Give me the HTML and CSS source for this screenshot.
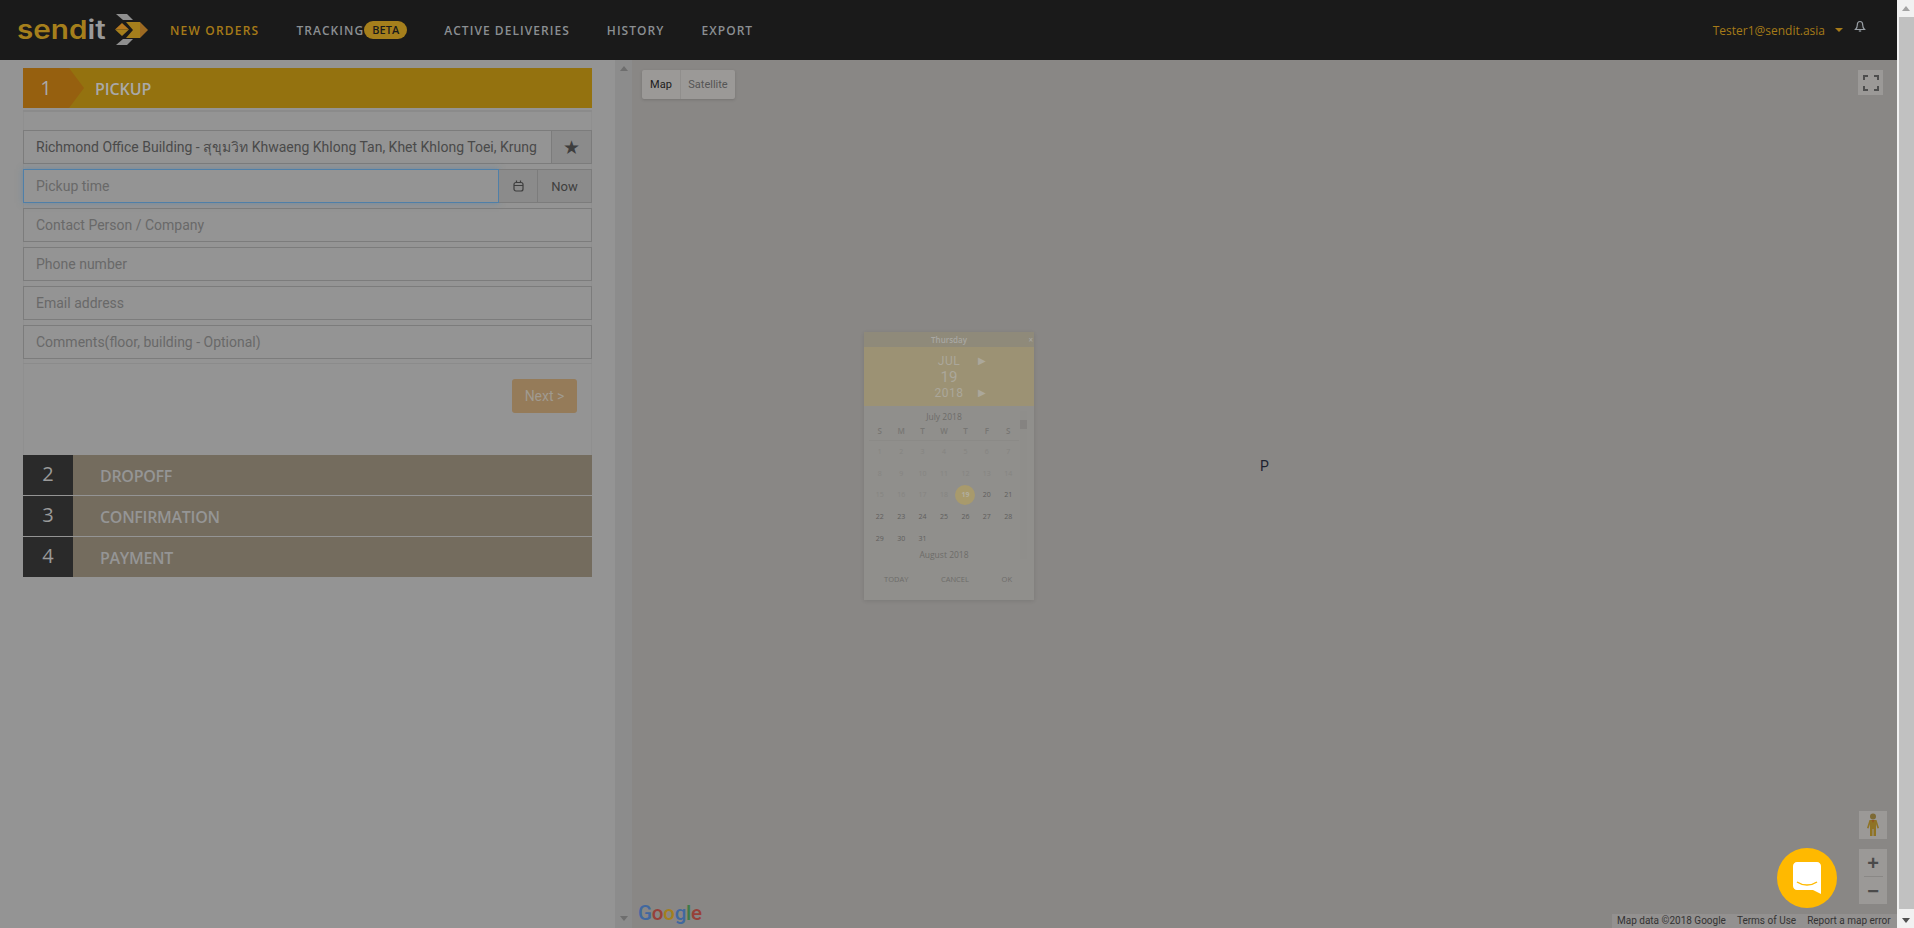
FILE: index.html
```html
<!DOCTYPE html>
<html lang="en">
<head>
    <meta charset="UTF-8">
    <meta name="viewport" content="width=device-width, initial-scale=1.0">
    <title>Sendit - New orders</title>
    <link rel="stylesheet" href="styles.css">
</head>
<body>
    <div class="app">
        <!-- Top bar -->
        <header class="topbar">
            <a class="logo" href="#">
                <span class="logo-word"><span class="logo-send">send</span><span class="logo-it">it</span></span>
                <svg class="logo-mark" width="36" height="32" viewBox="0 0 36 32">
                    <polygon points="1,0 12,0 18,6 8,6" fill="#8f8f8f"/>
                    <polygon points="1,31 12,31 18,25 8,25" fill="#8f8f8f"/>
                    <polygon points="0,15.500 7,9 14,15.500" fill="#b5781f"/>
                    <polygon points="0,15.500 7,22 14,15.500" fill="#a57f1c"/>
                    <polygon points="11,8 25,8 25,24 11,24 18,16" fill="#a57f1c"/>
                    <polygon points="25,8 33,16 25,24" fill="#9d6a22"/>
                </svg>
            </a>
            <nav class="nav">
                <a class="nav-link active" href="#">NEW ORDERS</a>
                <a class="nav-link" href="#">TRACKING<span class="beta">BETA</span></a>
                <a class="nav-link" href="#">ACTIVE DELIVERIES</a>
                <a class="nav-link" href="#">HISTORY</a>
                <a class="nav-link" href="#">EXPORT</a>
            </nav>
            <div class="user">
                <span class="user-mail">Tester1@sendit.asia</span>
                <span class="caret"></span>
                <svg class="bell" width="12" height="13" viewBox="0 0 12 13">
                    <path d="M6 1.500C4 1.500 3.300 3 3.300 5C3.300 7.500 2.500 8.500 1.500 9.500H10.500C9.500 8.500 8.700 7.500 8.700 5C8.700 3 8 1.500 6 1.500Z" fill="#222" stroke="#9aa0a6" stroke-width="1.200"/>
                    <path d="M4.800 11H7.200" stroke="#9aa0a6" stroke-width="1.200"/>
                </svg>
            </div>
        </header>

        <main class="content">
            <!-- Left column -->
            <section class="sidebar">
                <div class="steps">
                    <div class="step-current">
                        <span class="step-current-num">1</span>
                        <span class="step-current-title">PICKUP</span>
                    </div>

                    <form class="pickup-form">
                        <div class="field-row">
                            <input class="field" type="text" value="Richmond Office Building - สุขุมวิท Khwaeng Khlong Tan, Khet Khlong Toei, Krung Thep Maha Nakhon, Thailand">
                            <button class="addon addon-star" type="button">★</button>
                        </div>
                        <div class="field-row">
                            <input class="field field-focus" type="text" placeholder="Pickup time">
                            <button class="addon addon-cal" type="button">
                                <svg width="11" height="12" viewBox="0 0 11 12" fill="none" stroke="#3e3e3e" stroke-width="1.200">
                                    <rect x="1" y="2.500" width="9" height="8.500" rx="2"/>
                                    <path d="M1 5.500H10M3.500 0.500V2.500M7.500 0.500V2.500"/>
                                </svg>
                            </button>
                            <button class="addon addon-now" type="button">Now</button>
                        </div>
                        <div class="field-row"><input class="field" type="text" placeholder="Contact Person / Company"></div>
                        <div class="field-row"><input class="field" type="text" placeholder="Phone number"></div>
                        <div class="field-row"><input class="field" type="text" placeholder="Email address"></div>
                        <div class="field-row"><input class="field" type="text" placeholder="Comments(floor, building - Optional)"></div>
                    </form>

                    <div class="form-footer">
                        <button class="next-btn" type="button">Next &gt;</button>
                    </div>

                    <div class="step-row"><span class="step-num">2</span><span class="step-title">DROPOFF</span></div>
                    <div class="step-row"><span class="step-num">3</span><span class="step-title">CONFIRMATION</span></div>
                    <div class="step-row"><span class="step-num">4</span><span class="step-title">PAYMENT</span></div>
                </div>
                <div class="side-scroll">
                    <span class="arrow-up"></span>
                    <span class="arrow-down"></span>
                </div>
            </section>

            <!-- Map -->
            <section class="map">
                <div class="map-type">
                    <span class="map-type-btn selected">Map</span>
                    <span class="map-type-btn">Satellite</span>
                </div>
                <div class="map-full">
                    <svg width="16" height="16" viewBox="0 0 16 16" fill="none" stroke="#4d4d4d" stroke-width="2">
                        <path d="M1 5V1H5M11 1H15V5M15 11V15H11M5 15H1V11"/>
                    </svg>
                </div>

                <span class="map-pin">P</span>

                <!-- Date picker that sits over the map -->
                <div class="picker">
                    <div class="picker-day"><span>Thursday</span><span class="picker-close">×</span></div>
                    <div class="picker-head">
                        <div class="picker-head-row"><span>JUL</span><span class="picker-next">▶</span></div>
                        <div class="picker-date">19</div>
                        <div class="picker-head-row"><span>2018</span><span class="picker-next">▶</span></div>
                    </div>
                    <div class="picker-body">
                        <div class="picker-list">
                            <div class="picker-title">July 2018</div>
                            <div class="picker-week">
                                <span>S</span><span>M</span><span>T</span><span>W</span><span>T</span><span>F</span><span>S</span>
                            </div>
                            <div class="picker-days">
                                <span class="past">1</span><span class="past">2</span><span class="past">3</span><span class="past">4</span><span class="past">5</span><span class="past">6</span><span class="past">7</span>
                                <span class="past">8</span><span class="past">9</span><span class="past">10</span><span class="past">11</span><span class="past">12</span><span class="past">13</span><span class="past">14</span>
                                <span class="past">15</span><span class="past">16</span><span class="past">17</span><span class="past">18</span><span class="today">19</span><span>20</span><span>21</span>
                                <span>22</span><span>23</span><span>24</span><span>25</span><span>26</span><span>27</span><span>28</span>
                                <span>29</span><span>30</span><span>31</span>
                            </div>
                            <div class="picker-title">August 2018</div>
                        </div>
                        <div class="picker-scroll"><span class="picker-thumb"></span></div>
                    </div>
                    <div class="picker-actions">
                        <span>TODAY</span><span>CANCEL</span><span>OK</span>
                    </div>
                </div>

                <div class="pegman">
                    <svg width="14" height="24" viewBox="0 0 14 24">
                        <circle cx="7" cy="3.500" r="3" fill="#7d6a35"/>
                        <path d="M3.500 7H10.500L13 15L11.500 15.500L10 11V23H7.500V16H6.500V23H4V11L2.500 15.500L1 15Z" fill="#8f7324"/>
                        <path d="M5.500 7L7 10L8.500 7Z" fill="#94561f"/>
                    </svg>
                </div>
                <div class="zoom-box">
                    <button class="zoom-btn" type="button">+</button>
                    <span class="zoom-line"></span>
                    <button class="zoom-btn" type="button">−</button>
                </div>

                <div class="google"><span class="g-blue">G</span><span class="g-red">o</span><span class="g-yellow">o</span><span class="g-blue">g</span><span class="g-green">l</span><span class="g-red">e</span></div>

                <div class="attribution">
                    <span>Map data ©2018 Google</span>
                    <span>Terms of Use</span>
                    <span>Report a map error</span>
                </div>

                <button class="chat" type="button">
                    <svg width="28" height="33" viewBox="0 0 28 33">
                        <path d="M4 0H24C26.200 0 28 1.800 28 4V32L20 28H4C1.800 28 0 26.200 0 24V4C0 1.800 1.800 0 4 0Z" fill="#fff"/>
                        <path d="M4 20C10 24 18 24 24 20" fill="none" stroke="#ffb900" stroke-width="1.500"/>
                    </svg>
                </button>
            </section>
        </main>
    </div>

    <!-- Page scrollbar -->
    <div class="page-scroll">
        <span class="arrow-up"></span>
        <span class="page-thumb"></span>
        <span class="arrow-down"></span>
    </div>
</body>
</html>
```

FILE: styles.css
```css
* {
    box-sizing: border-box;
}
html, body {
    height: 100%;
}
body {
    margin: 0;
    display: flex;
    overflow: hidden;
    background: #949494;
    font-family: Roboto, Arial, sans-serif;
}
.app {
    flex: 1;
    display: flex;
    flex-direction: column;
    min-width: 0;
}

/* Top bar */
.topbar {
    height: 60px;
    flex-shrink: 0;
    background: #1a1a1a;
    display: flex;
    align-items: center;
    padding-left: 17px;
}
.logo {
    display: flex;
    align-items: center;
    width: 153px;
    padding-right: 19px;
    font-family: Inter, sans-serif;
    font-size: 26px;
    font-weight: 600;
    line-height: 1;
    text-decoration: none;
}
.logo-word {
    transform: scaleX(1.14);
    transform-origin: left center;
}
.logo-send {
    color: #a57f1c;
}
.logo-it {
    color: #9a9a9a;
}
.logo-mark {
    margin-left: auto;
    flex-shrink: 0;
}
.nav {
    display: flex;
    align-items: center;
    gap: 37px;
}
.nav-link {
    display: flex;
    align-items: center;
    color: #8b8f92;
    font-family: "Open Sans", sans-serif;
    font-size: 12px;
    font-weight: 600;
    letter-spacing: 1.050px;
    text-decoration: none;
}
.nav-link.active {
    color: #a67a18;
    letter-spacing: 1.200px;
}
.beta {
    width: 43px;
    height: 18px;
    border-radius: 9px;
    background: #a57f1c;
    color: #1a1a1a;
    font-size: 11px;
    letter-spacing: 0;
    line-height: 18px;
    text-align: center;
}
.user {
    margin-left: auto;
    display: flex;
    align-items: center;
    padding-right: 31px;
}
.user-mail {
    color: #a67a18;
    font-family: "Open Sans", sans-serif;
    font-size: 12px;
}
.caret {
    margin-left: 10px;
    border: 4px solid transparent;
    border-top: 4px solid #a67a18;
    border-bottom: 0;
}
.bell {
    margin-left: 11px;
    position: relative;
    top: -4px;
}

.content {
    flex: 1;
    display: flex;
    min-height: 0;
}

/* Left column */
.sidebar {
    width: 632px;
    flex-shrink: 0;
    display: flex;
    background: #949494;
    padding-left: 23px;
}
.steps {
    width: 569px;
    padding-top: 8px;
}
.step-current {
    height: 40px;
    display: flex;
    align-items: center;
    background: #94720f;
}
.step-current-num {
    width: 46px;
    height: 40px;
    background: #96600f;
    color: #a9a9a9;
    font-family: "Open Sans", sans-serif;
    font-size: 20px;
    line-height: 40px;
    text-align: center;
    position: relative;
}
.step-current-num::after {
    content: "";
    position: absolute;
    left: 46px;
    top: 0;
    border-left: 15px solid #96600f;
    border-top: 20px solid transparent;
    border-bottom: 20px solid transparent;
}
.step-current-title {
    margin-left: 26px;
    padding-top: 2px;
    color: #a9a9a9;
    font-family: "Open Sans", sans-serif;
    font-size: 16px;
    font-weight: 600;
    letter-spacing: -0.100px;
}
.pickup-form {
    display: flex;
    flex-direction: column;
    gap: 5px;
    padding-top: 18px;
    padding-bottom: 4px;
    border-top: 2px solid #8b8b8b;
    border-bottom: 1px solid #8b8b8b;
    margin-top: 2px;
    box-shadow: inset 1px 0 0 #8f8f8f, inset -1px 0 0 #8f8f8f;
}
.field-row {
    display: flex;
}
.field {
    flex: 1;
    min-width: 0;
    height: 34px;
    padding: 0 12px;
    background: transparent;
    border: 1px solid #7c7c7c;
    border-radius: 0;
    color: #4a4a4a;
    font-family: Roboto, "Noto Sans", sans-serif;
    font-size: 14px;
    outline: none;
}
.field::placeholder {
    color: #696969;
    opacity: 1;
}
.field-focus {
    border-color: #4f7fa8;
    box-shadow: 0 0 6px rgba(79, 127, 168, 0.5);
}
.addon {
    height: 34px;
    padding: 0;
    background: #8b8b8b;
    border: 1px solid #7c7c7c;
    border-left: 0;
    color: #3e3e3e;
    font-family: Roboto, sans-serif;
    font-size: 13px;
}
.addon-star {
    width: 40px;
    font-size: 19px;
}
.addon-cal {
    width: 39px;
    display: flex;
    align-items: center;
    justify-content: center;
}
.addon-now {
    width: 54px;
}
.form-footer {
    height: 91px;
    padding: 15px 15px 0 0;
    display: flex;
    justify-content: flex-end;
    align-items: flex-start;
    box-shadow: inset 1px 0 0 #8f8f8f, inset -1px 0 0 #8f8f8f;
}
.next-btn {
    width: 65px;
    height: 34px;
    background: #957b59;
    border: 0;
    border-radius: 3px;
    color: #a09a90;
    font-family: Roboto, sans-serif;
    font-size: 14px;
}
.step-row {
    height: 40px;
    margin-bottom: 1px;
    display: flex;
    align-items: center;
    background: #746c5e;
}
.step-row:last-child {
    margin-bottom: 0;
}
.step-num {
    width: 50px;
    height: 40px;
    flex-shrink: 0;
    background: #2a2a2a;
    color: #9a9a9a;
    font-family: "Open Sans", sans-serif;
    font-size: 20px;
    line-height: 38px;
    text-align: center;
}
.step-title {
    margin-left: 27px;
    padding-top: 2px;
    color: #959595;
    font-family: "Open Sans", sans-serif;
    font-size: 16px;
    font-weight: 600;
    letter-spacing: -0.300px;
}
.side-scroll {
    width: 17px;
    margin-left: auto;
    background: #8c8c8c;
    display: flex;
    flex-direction: column;
    justify-content: space-between;
    align-items: center;
    padding: 6px 0 7px;
}

/* Scrollbar arrows */
.arrow-up,
.arrow-down {
    display: block;
    border: 4px solid transparent;
}
.arrow-up {
    border-top: 0;
    border-bottom: 5px solid #6e6e6e;
}
.arrow-down {
    border-bottom: 0;
    border-top: 5px solid #6e6e6e;
}

/* Map */
.map {
    flex: 1;
    position: relative;
    background: #898785;
    overflow: hidden;
}
.map-type {
    position: absolute;
    left: 10px;
    top: 10px;
    display: flex;
    height: 29px;
    border-radius: 2px;
    background: #9b9997;
    box-shadow: 0 1px 3px rgba(0, 0, 0, 0.15);
    font-size: 11px;
    line-height: 29px;
}
.map-type-btn {
    width: 38px;
    text-align: center;
    color: #555;
}
.map-type-btn + .map-type-btn {
    width: 55px;
    border-left: 1px solid #908e8c;
}
.map-type-btn.selected {
    color: #1b1b1b;
}
.map-full {
    position: absolute;
    right: 14px;
    top: 10px;
    width: 25px;
    height: 25px;
    background: #9b9997;
    display: flex;
    align-items: center;
    justify-content: center;
}
.map-pin {
    position: absolute;
    left: 628px;
    top: 398px;
    color: #1d2230;
    font-size: 14px;
}

/* Date picker */
.picker {
    position: absolute;
    left: 232px;
    top: 272px;
    width: 170px;
    height: 268px;
    display: flex;
    flex-direction: column;
    background: #908f8c;
    box-shadow: 0 1px 4px rgba(0, 0, 0, 0.1);
    font-family: "Open Sans", sans-serif;
}
.picker-day {
    height: 15px;
    background: #8f8a7a;
    color: #a8a7a2;
    font-size: 8px;
    font-weight: 600;
    line-height: 15px;
    text-align: center;
    position: relative;
}
.picker-close {
    position: absolute;
    right: 1px;
    top: 0;
}
.picker-head {
    height: 59px;
    background: #9c9274;
    color: #aba79a;
    display: flex;
    flex-direction: column;
    align-items: center;
    padding-top: 6px;
    font-family: Roboto, sans-serif;
}
.picker-head-row {
    display: flex;
    justify-content: center;
    position: relative;
    width: 100%;
    font-size: 12px;
    letter-spacing: 0.500px;
    line-height: 16px;
}
.picker-next {
    position: absolute;
    left: 114px;
    font-size: 10px;
}
.picker-date {
    font-size: 15px;
    line-height: 16px;
}
.picker-body {
    display: flex;
    flex: 1;
    padding: 5px 7px 0 5px;
    min-height: 0;
}
.picker-list {
    width: 150px;
}
.picker-title {
    font-size: 8.500px;
    line-height: 11px;
    text-align: center;
    color: #6d6c69;
}
.picker-week {
    display: grid;
    grid-template-columns: repeat(7, 1fr);
    margin-top: 3px;
    padding-bottom: 3px;
    border-bottom: 1px solid #8b8a87;
    font-size: 8px;
    font-weight: 600;
    line-height: 12px;
    text-align: center;
    color: #777673;
}
.picker-days {
    display: grid;
    grid-template-columns: repeat(7, 1fr);
    grid-auto-rows: 21.600px;
    font-size: 7px;
    color: #5f5e5c;
    text-align: center;
    align-items: center;
    justify-items: center;
}
.picker-days .past {
    color: #858481;
}
.picker-days .today {
    width: 20px;
    height: 20px;
    border-radius: 50%;
    background: #a89a6c;
    color: #b2ae9e;
    font-weight: 700;
    line-height: 20px;
}
.picker-scroll {
    width: 7px;
    height: 148px;
    margin-left: auto;
    background: #8f8e8b;
    padding-top: 9px;
}
.picker-thumb {
    display: block;
    height: 9px;
    background: #858381;
}
.picker-actions {
    display: flex;
    justify-content: space-between;
    height: 40px;
    padding: 12px 22px 0 20px;
    font-size: 7.500px;
    line-height: 14px;
    color: #6d6c69;
}

/* Map controls */
.pegman {
    position: absolute;
    right: 10px;
    top: 751px;
    width: 28px;
    height: 28px;
    background: #9b9997;
    display: flex;
    align-items: center;
    justify-content: center;
}
.zoom-box {
    position: absolute;
    right: 10px;
    top: 789px;
    width: 28px;
    height: 55px;
    background: #9b9997;
    display: flex;
    flex-direction: column;
    align-items: center;
}
.zoom-btn {
    flex: 1;
    width: 100%;
    padding: 0;
    border: 0;
    background: transparent;
    color: #4a4a4a;
    font-family: "Liberation Sans", sans-serif;
    font-size: 20px;
    font-weight: 700;
    line-height: 1;
}
.zoom-line {
    width: 19px;
    height: 1px;
    background: #8a8886;
}
.google {
    position: absolute;
    left: 6px;
    bottom: 3px;
    font-family: Roboto, sans-serif;
    font-size: 20.500px;
    font-weight: 500;
    letter-spacing: -0.200px;
    line-height: 24px;
}
.g-blue {
    color: #41689f;
}
.g-red {
    color: #974139;
}
.g-yellow {
    color: #a47f1e;
}
.g-green {
    color: #3e7a48;
}
.attribution {
    position: absolute;
    right: 0;
    bottom: 0;
    width: 285px;
    height: 14px;
    display: flex;
    background: #939190;
    color: #333;
    font-size: 10px;
    line-height: 14px;
    padding-left: 5px;
}
.attribution span + span {
    margin-left: 11px;
}
.chat {
    position: absolute;
    left: 1145px;
    top: 788px;
    width: 60px;
    height: 60px;
    border: 0;
    padding: 0;
    border-radius: 50%;
    background: #ffb900;
    display: flex;
    align-items: center;
    justify-content: center;
}

/* Page scrollbar */
.page-scroll {
    width: 17px;
    flex-shrink: 0;
    background: #f1f1f1;
    display: flex;
    flex-direction: column;
    align-items: center;
    padding: 6px 0 5px;
}
.page-scroll .arrow-up {
    margin-bottom: 6px;
    border-bottom-color: #a3a3a3;
}
.page-scroll .arrow-down {
    margin-top: 9px;
    border-top-color: #505050;
}
.page-thumb {
    flex: 1;
    width: 15px;
    margin-left: 2px;
    background: #c1c1c1;
}
```
